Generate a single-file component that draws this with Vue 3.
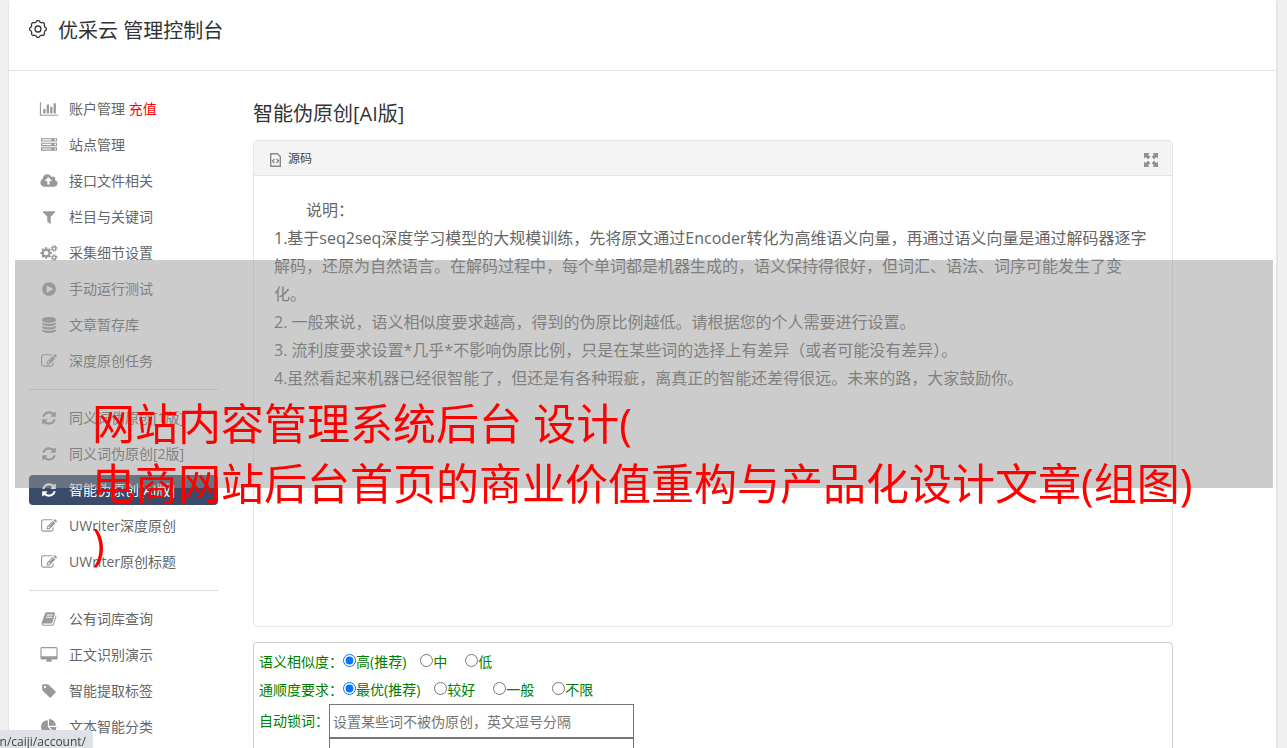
<template>
  <div class="console">
    <header class="console-head">
      <svg class="head-gear" viewBox="0 0 18 18" aria-hidden="true">
        <path :d="gearPath" />
        <circle cx="9" cy="9" r="3" />
      </svg>
      <h1 class="console-title">优采云 管理控制台</h1>
    </header>

    <div class="console-body">
      <!-- 左侧导航 -->
      <nav class="side">
        <ul v-for="(group, i) in menus" :key="i" class="side-group">
          <li v-for="item in group" :key="item.text">
            <a href="#" class="side-link" :class="{ active: item.active }">
              <svg class="side-icon" :viewBox="'0 0 ' + icons[item.icon].w + ' 1792'" aria-hidden="true">
                <path :d="icons[item.icon].d" />
                <template v-if="item.icon === 'cogs'">
                  <g v-for="cy in [384, 1408]" :key="cy" class="small-gear">
                    <circle cx="1536" :cy="cy" r="190" />
                    <circle class="teeth" cx="1536" :cy="cy" r="300" />
                  </g>
                </template>
              </svg>
              <span class="side-text">{{ item.text }} <em v-if="item.tip" class="side-tip">{{ item.tip }}</em></span>
            </a>
          </li>
        </ul>
      </nav>

      <main class="main">
        <h2 class="main-title">智能伪原创[AI版]</h2>

        <!-- 编辑器 -->
        <section class="editor">
          <div class="editor-bar">
            <button type="button" class="bar-btn">
              <svg class="source-icon" viewBox="0 0 11 14" aria-hidden="true">
                <path d="M.7.7h6.800l2.800 2.800v9.800H.7z" />
                <path d="M4.500 6L2.500 8l2 2M6.500 6l2 2-2 2" />
              </svg>
              源码
            </button>
            <button type="button" class="bar-btn" aria-label="全屏">
              <svg class="full-icon" viewBox="0 0 14 14" aria-hidden="true">
                <path d="M0 0h5.500L4 1.500 6.300 4 4 6.300 1.500 4 0 5.500zM14 0v5.500L12.500 4 10 6.300 7.700 4 10 1.500 8.500 0zM0 14V8.500L1.500 10 4 7.700 6.300 10 4 12.500 5.500 14zM14 14H8.500l1.500-1.500L7.700 10 10 7.700l2.500 2.300L14 8.500z" />
              </svg>
            </button>
          </div>
          <div class="editor-text">
            <p class="indent">说明：</p>
            <p v-for="line in notes" :key="line">{{ line }}</p>
          </div>
        </section>

        <!-- 参数设置 -->
        <form class="options">
          <fieldset v-for="row in radios" :key="row.name" class="radio-row">
            <legend class="radio-legend">{{ row.label }}</legend>
            <label v-for="opt in row.options" :key="opt" class="radio-item">
              <input v-model="picked[row.name]" type="radio" :name="row.name" :value="opt" />{{ opt }}
            </label>
          </fieldset>
          <div class="lock-row">
            <label for="lock-words">自动锁词：</label>
            <div class="lock-fields">
              <input id="lock-words" type="text" placeholder="设置某些词不被伪原创，英文逗号分隔" />
              <input type="text" aria-label="锁词补充" />
            </div>
          </div>
        </form>
      </main>
    </div>
  </div>

  <!-- 半透明标题横幅 -->
  <div class="banner">
    <p class="banner-text">网站内容管理系统后台 设计(<br />电商网站后台首页的商业价值重构与产品化设计文章(组图)<br />)</p>
  </div>

  <div class="status-url">n/caiji/account/</div>
</template>

<script setup>
import { reactive } from 'vue'

const menus = [
  [
    { icon: 'chart', text: '账户管理', tip: '充值' },
    { icon: 'server', text: '站点管理' },
    { icon: 'cloud', text: '接口文件相关' },
    { icon: 'filter', text: '栏目与关键词' },
    { icon: 'cogs', text: '采集细节设置' },
    { icon: 'play', text: '手动运行测试' },
    { icon: 'database', text: '文章暂存库' },
    { icon: 'edit', text: '深度原创任务' }
  ],
  [
    { icon: 'refresh', text: '同义词伪原创[1版]' },
    { icon: 'refresh', text: '同义词伪原创[2版]' },
    { icon: 'refresh', text: '智能伪原创[AI版]', active: true },
    { icon: 'edit', text: 'UWriter深度原创' },
    { icon: 'edit', text: 'UWriter原创标题' }
  ],
  [
    { icon: 'book', text: '公有词库查询' },
    { icon: 'desktop', text: '正文识别演示' },
    { icon: 'tag', text: '智能提取标签' },
    { icon: 'pie', text: '文本智能分类' }
  ]
]

const notes = [
  '1.基于seq2seq深度学习模型的大规模训练，先将原文通过Encoder转化为高维语义向量，再通过语义向量是通过解码器逐字解码，还原为自然语言。在解码过程中，每个单词都是机器生成的，语义保持得很好，但词汇、语法、词序可能发生了变化。',
  '2. 一般来说，语义相似度要求越高，得到的伪原比例越低。请根据您的个人需要进行设置。',
  '3. 流利度要求设置*几乎*不影响伪原比例，只是在某些词的选择上有差异（或者可能没有差异）。',
  '4.虽然看起来机器已经很智能了，但还是有各种瑕疵，离真正的智能还差得很远。未来的路，大家鼓励你。'
]

const radios = [
  { name: 'similar', label: '语义相似度：', options: ['高(推荐)', '中', '低'] },
  { name: 'fluent', label: '通顺度要求：', options: ['最优(推荐)', '较好', '一般', '不限'] }
]

const picked = reactive({ similar: '高(推荐)', fluent: '最优(推荐)' })

// 标题齿轮：沿圆周起伏的轮廓线
const gearPath = 'M' + Array.from({ length: 96 }, (_, i) => {
  const a = (i / 96) * Math.PI * 2
  const wave = Math.cos(a * 8)
  const r = 7.7 + Math.max(-0.6, Math.min(0.6, wave))
  return (9 + r * Math.sin(a)).toFixed(2) + ' ' + (9 - r * Math.cos(a)).toFixed(2)
}).join('L') + 'Z'

const icons = {
  chart: {
    w: 2048,
    d: 'M640 896v512h-256v-512h256zm384-512v1024h-256v-1024h256zm1024 1152v128h-2048v-1536h128v1408h1920zm-640-896v768h-256v-768h256zm384-384v1152h-256v-1152h256z'
  },
  server: {
    w: 1792,
    d: 'M128 1408h1024v-128h-1024v128zM128 896h1024v-128h-1024v128zM1696 1344a96 96 0 1 0-192 0a96 96 0 1 0 192 0zM128 384h1024v-128h-1024v128zM1696 832a96 96 0 1 0-192 0a96 96 0 1 0 192 0zM1696 320a96 96 0 1 0-192 0a96 96 0 1 0 192 0zM1792 1152v384h-1792v-384zM1792 640v384h-1792v-384zM1792 128v384h-1792v-384z'
  },
  cloud: {
    w: 1920,
    d: 'M1280 864q0-14-9-23l-352-352q-9-9-23-9t-23 9l-351 351q-10 12-10 24 0 14 9 23t23 9h224v352q0 13 9.500 22.500t22.500 9.500h192q13 0 22.500-9.500t9.500-22.500v-352h224q13 0 22.500-9.500t9.500-22.500zm640 288q0 159-112.500 271.500t-271.500 112.500h-1088q-185 0-316.500-131.500t-131.500-316.500q0-130 70-240t188-165q-2-30-2-43 0-212 150-362t362-150q156 0 285.500 87t188.500 231q71-62 166-62 106 0 181 75t75 181q0 76-41 138 130 31 213.500 135.500t83.500 238.500z'
  },
  filter: {
    w: 1792,
    d: 'M1595 295q17 41-14 70l-493 493v742q0 42-39 59-13 5-25 5-27 0-45-19l-256-256q-19-19-19-45v-486l-493-493q-31-29-14-70 17-39 59-39h1280q42 0 59 39z'
  },
  cogs: {
    w: 1920,
    d: 'M896 896q0-106-75-181t-181-75-181 75-75 181 75 181 181 75 181-75 75-181zm384-91v185q0 10-7 19.500t-16 10.500l-155 24q-11 35-32 76 34 48 90 115 7 11 7 20 0 12-7 19-23 30-82.500 89.500t-78.500 59.500q-11 0-21-7l-115-90q-37 19-77 31-11 108-23 155-7 24-30 24h-186q-11 0-20-7.500t-10-17.500l-23-153q-34-10-75-31l-118 89q-7 7-20 7-11 0-21-8-144-133-144-160 0-9 7-19 10-14 41-53t47-61q-23-44-35-82l-152-24q-10-1-17-9.500t-7-19.500v-185q0-10 7-19.500t16-10.500l155-24q11-35 32-76-34-48-90-115-7-11-7-20 0-12 7-20 22-30 82-89t79-59q11 0 21 7l115 90q34-18 77-32 11-108 23-154 7-24 30-24h186q11 0 20 7.500t10 17.500l23 153q34 10 75 31l118-89q8-7 20-7 11 0 21 8 144 133 144 160 0 8-7 19-12 16-42 54t-45 60q23 48 34 82l152 23q10 2 17 10.500t7 19.500z'
  },
  play: {
    w: 1792,
    d: 'M896 128q209 0 385.500 103t279.500 279.500 103 385.500-103 385.500-279.500 279.500-385.500 103-385.500-103-279.500-279.500-103-385.500 103-385.500 279.500-279.500 385.500-103zm384 823q32-18 32-55t-32-55l-544-320q-31-19-64-1-32 19-32 56v640q0 37 32 56 16 8 32 8 17 0 32-9z'
  },
  database: {
    w: 1792,
    d: 'M896 768q237 0 443-43t325-127v170q0 69-103 128t-280 93.500-385 34.500-385-34.500-280-93.500-103-128v-170q119 84 325 127t443 43zm0 768q237 0 443-43t325-127v170q0 69-103 128t-280 93.500-385 34.500-385-34.500-280-93.500-103-128v-170q119 84 325 127t443 43zm0-384q237 0 443-43t325-127v170q0 69-103 128t-280 93.500-385 34.500-385-34.500-280-93.500-103-128v-170q119 84 325 127t443 43zm0-1152q208 0 385 34.500t280 93.500 103 128v128q0 69-103 128t-280 93.500-385 34.500-385-34.500-280-93.500-103-128v-128q0-69 103-128t280-93.500 385-34.500z'
  },
  edit: {
    w: 1792,
    d: 'M888 1184l116-116-152-152-116 116v56h96v96h56zm440-720q-16-16-33 1l-350 350q-17 17-1 33t33-1l350-350q17-17 1-33zm80 594v190q0 119-84.500 203.500t-203.500 84.500h-832q-119 0-203.500-84.500t-84.500-203.500v-832q0-119 84.500-203.500t203.500-84.500h832q63 0 117 25 15 7 18 23 3 17-9 29l-49 49q-14 14-32 8-23-6-45-6h-832q-66 0-113 47t-47 113v832q0 66 47 113t113 47h832q66 0 113-47t47-113v-126q0-13 9-22l64-64q15-15 35-7t20 29zm-96-738l288 288-672 672h-288v-288zm444 132l-92 92-288-288 92-92q28-28 68-28t68 28l152 152q28 28 28 68t-28 68z'
  },
  refresh: {
    w: 1792,
    d: 'M1639 1056q0 5-1 7-64 268-268 434.500t-478 166.500q-146 0-282.500-55t-243.500-157l-129 129q-19 19-45 19t-45-19-19-45v-448q0-26 19-45t45-19h448q26 0 45 19t19 45-19 45l-137 137q71 66 161 102t187 36q134 0 250-65t186-179q11-17 53-117 8-23 30-23h192q13 0 22.500 9.500t9.500 22.500zm25-800v448q0 26-19 45t-45 19h-448q-26 0-45-19t-19-45 19-45l138-138q-148-137-349-137-134 0-250 65t-186 179q-11 17-53 117-8 23-30 23h-199q-13 0-22.500-9.500t-9.500-22.500v-7q65-268 270-434.500t480-166.500q146 0 284 55.500t245 156.500l130-129q19-19 45-19t45 19 19 45z'
  },
  book: {
    w: 1792,
    d: 'M1703 478q40 57 18 129l-275 906q-19 64-76.500 107.500t-122.500 43.500h-923q-77 0-148.500-53.500t-99.500-131.500q-24-67-2-127 0-4 3-27t4-37q1-8-3-21.500t-3-19.500q2-11 8-21t16.500-23.500 16.500-23.500q23-38 45-91.500t30-91.500q3-10 .5-30t-.5-28q3-11 17-28t17-23q21-36 42-92t25-90q1-9-2.500-32t.5-28q4-13 22-30.500t22-22.500q19-26 42.500-84.500t27.500-96.500q1-8-3-25.500t-2-26.500q2-8 9-18t18-23 17-21q8-12 16.500-30.500t15-35 16-36 19.500-32 26.500-23.500 36-11.500 47.500 5.500l-1 3q38-9 51-9h761q74 0 114 56t18 130l-274 906q-36 119-71.500 153.500t-128.500 34.500h-869q-27 0-38 15-11 16-1 43 24 70 144 70h923q29 0 56-15.500t35-41.500l300-987q7-22 5-57 38 15 59 43zm-1064 2q-4 13 2 22.500t20 9.500h608q13 0 25.500-9.500t16.500-22.500l21-64q4-13-2-22.500t-20-9.500h-608q-13 0-25.500 9.500t-16.500 22.500zm-83 256q-4 13 2 22.500t20 9.500h608q13 0 25.500-9.500t16.500-22.500l21-64q4-13-2-22.500t-20-9.500h-608q-13 0-25.500 9.500t-16.500 22.500z'
  },
  desktop: {
    w: 1920,
    d: 'M1792 992v-832q0-13-9.500-22.500t-22.500-9.500h-1600q-13 0-22.500 9.500t-9.500 22.500v832q0 13 9.500 22.500t22.500 9.500h1600q13 0 22.500-9.500t9.500-22.500zm128-832v1088q0 66-47 113t-113 47h-544q0 37 16 77.500t32 71 16 43.500q0 26-19 45t-45 19h-512q-26 0-45-19t-19-45q0-14 16-44t32-70 16-78h-544q-66 0-113-47t-47-113v-1088q0-66 47-113t113-47h1600q66 0 113 47t47 113z'
  },
  tag: {
    w: 1792,
    d: 'M576 448q0-53-37.500-90.500t-90.500-37.500-90.500 37.500-37.500 90.500 37.500 90.500 90.500 37.500 90.500-37.500 37.500-90.500zm1067 576q0 53-37 90l-491 492q-39 37-91 37-53 0-90-37l-715-716q-38-37-64.500-101t-26.500-117v-416q0-52 38-90t90-38h416q53 0 117 26.500t102 64.500l715 714q37 39 37 91z'
  },
  pie: {
    w: 1792,
    d: 'M768 890l546 546q-106 108-247.500 168t-298.500 60q-209 0-385.500-103t-279.500-279.500-103-385.500 103-385.500 279.500-279.500 385.500-103v762zm187 6h773q0 157-60 298.500t-168 247.500zm709-128h-768v-768q209 0 385.500 103t279.500 279.500 103 385.500z'
  }
}
</script>

<style>
body {
  background: #f0f0f0;
  overflow: hidden;
}

#app {
  height: 100vh;
  overflow: hidden;
}
</style>

<style scoped>
.console,
.banner,
.status-url {
  font-family: "Open Sans", "Noto Sans CJK SC", sans-serif;
  box-sizing: border-box;
}

.console {
  margin: 0 9px 0 8px;
  min-height: 100vh;
  background: #fff;
  border: solid #e5e5e5;
  border-width: 0 2px 0 1px;
  border-radius: 4px 4px 0 0;
  color: #666;
  font-size: 14px;
}

.console-head {
  display: flex;
  align-items: center;
  gap: 11px;
  height: 71px;
  padding: 0 20px 8px;
  box-sizing: border-box;
  border-bottom: 1px solid #e5e5e5;
}

.head-gear {
  width: 18px;
  height: 18px;
  margin-bottom: 4px;
  fill: none;
  stroke: #333;
  stroke-width: 1.3;
}

.console-title,
.main-title {
  margin: 0;
  color: #333;
  font-size: 20px;
  font-weight: 400;
  line-height: 28px;
}

.console-body {
  display: flex;
  gap: 35px;
  padding: 23px 103px 0 20px;
}

.side {
  flex: 0 0 189px;
}

.side-group {
  display: flex;
  flex-direction: column;
  gap: 6px;
  margin: 0;
  padding: 0;
  list-style: none;
}

.side-group + .side-group {
  margin-top: 13px;
  padding-top: 13px;
  border-top: 1px solid #ddd;
}

.side-link {
  display: flex;
  align-items: center;
  gap: 10px;
  height: 30px;
  padding: 0 10px;
  border-radius: 4px;
  color: #666;
  text-decoration: none;
  white-space: nowrap;
}

.side-link.active {
  background: #394b69;
  color: #fff;
}

.side-icon {
  width: 20px;
  height: 16px;
  fill: #999;
}

.side-link.active .side-icon {
  fill: #fff;
}

.small-gear {
  fill: none;
  stroke: #999;
  stroke-width: 150;
}

.small-gear .teeth {
  stroke-dasharray: 118 118;
}

.side-text {
  padding-bottom: 2px;
}

.side-tip {
  color: #f00;
  font-style: normal;
}

.main {
  flex: 1;
  min-width: 0;
}

.main-title {
  margin: 6px 0 12px;
}

.editor {
  border: 1px solid #e5e5e5;
  border-radius: 4px;
}

.editor-bar {
  display: flex;
  justify-content: space-between;
  align-items: center;
  height: 34px;
  padding: 0 14px 0 16px;
  background: #f4f4f4;
  border-bottom: 1px solid #e5e5e5;
}

.bar-btn {
  display: flex;
  align-items: center;
  gap: 7px;
  padding: 0;
  border: 0;
  background: none;
  color: #444;
  font-family: inherit;
  font-size: 12px;
}

.source-icon,
.full-icon {
  height: 14px;
  margin-top: 4px;
}

.source-icon {
  width: 11px;
  fill: none;
  stroke: #888;
  stroke-width: 1.4;
}

.full-icon {
  width: 14px;
  fill: #909090;
}

.editor-text {
  min-height: 450px;
  padding: 20px;
  box-sizing: border-box;
  font-size: 16px;
  line-height: 28px;
}

.editor-text p {
  margin: 0;
}

.editor-text .indent {
  text-indent: 2em;
}

.options {
  margin-top: 15px;
  padding: 5px;
  border: 1px solid #ccc;
  border-radius: 4px;
  color: #008000;
}

.radio-row {
  display: flex;
  margin: 0;
  padding: 0;
  border: 0;
  line-height: 28px;
}

.radio-legend {
  float: left;
  padding: 0;
}

.radio-item {
  display: flex;
  align-items: center;
  margin-right: 18px;
}

.radio-item:first-of-type {
  margin-right: 14px;
}

.radio-item input {
  width: 13px;
  height: 13px;
  margin: 0 0 3px;
}

.lock-row {
  display: flex;
  line-height: 34px;
}

.lock-fields {
  display: flex;
  flex-direction: column;
}

.lock-fields input {
  width: 305px;
  height: 34px;
  padding: 0 3px;
  box-sizing: border-box;
  border: 1px solid #767676;
  border-radius: 0;
  font-family: inherit;
  font-size: 14px;
}

.lock-fields input::placeholder {
  color: #757575;
}

.banner {
  position: fixed;
  top: 260px;
  left: 15px;
  right: 14px;
  height: 228px;
  padding: 134px 77px 0;
  background: rgba(153, 153, 153, 0.5);
}

.banner-text {
  margin: 0;
  color: #f00;
  font-size: 43px;
  line-height: 60px;
  white-space: nowrap;
}

.status-url {
  position: fixed;
  left: 0;
  bottom: 0;
  display: flex;
  justify-content: flex-end;
  width: 93px;
  height: 18px;
  padding-right: 7px;
  overflow: hidden;
  background: #dee1e6;
  border-top-right-radius: 4px;
  color: #444;
  font-size: 12px;
  line-height: 24px;
}
</style>
